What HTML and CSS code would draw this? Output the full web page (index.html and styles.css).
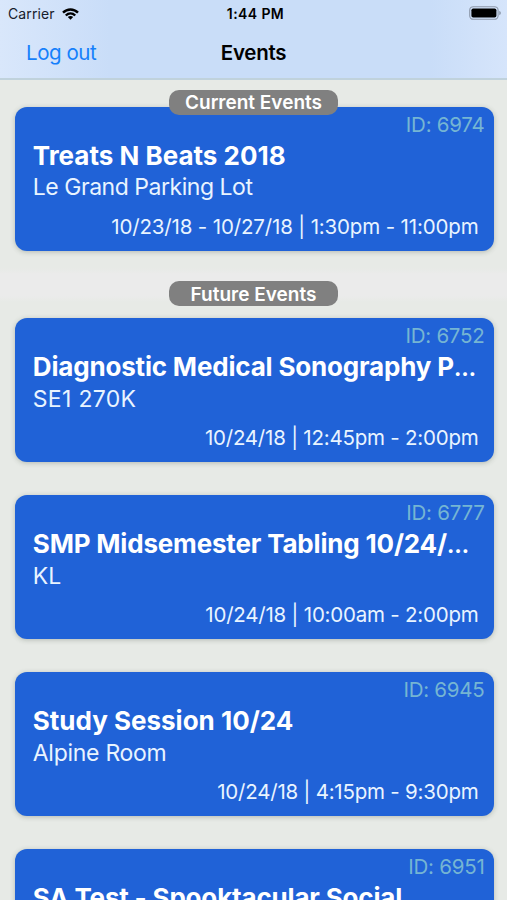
FILE: index.html
```html
<!DOCTYPE html>
<html lang="en">
<head>
<meta charset="utf-8">
<title>Events</title>
<link rel="stylesheet" href="styles.css">
</head>
<body>
<div class="screen">
  <header class="top">
    <div class="status">
      <div class="carrier"><span>Carrier</span>
        <svg class="wifi" viewBox="0 0 17 12" width="17" height="12"><g fill="none" stroke="#000" stroke-width="2.4"><path d="M1 4.6C5.2.4 11.8.4 16 4.6"/><path d="M3.8 7.5c2.7-2.6 6.7-2.6 9.4 0"/></g><path d="M5.8 9.1c1.5-1.4 3.9-1.4 5.4 0L8.5 11.8z"/></svg>
      </div>
      <span class="clock">1:44 PM</span>
      <svg class="battery" viewBox="0 0 33 14" width="33" height="14"><rect x=".7" y=".7" width="28.4" height="12.6" rx="3.6" fill="none" stroke="#8d98aa" stroke-width="1.1"/><rect x="2.4" y="2.4" width="25" height="9.2" rx="1.8"/><path d="M30.4 4.8c1.8.7 1.8 3.7 0 4.4z" fill="#7f899a"/></svg>
    </div>
    <nav class="nav">
      <a class="logout">Log out</a>
      <h1 class="heading">Events</h1>
    </nav>
  </header>
  <main class="list">
    <section>
      <div class="section-head first"><h2 class="pill">Current Events</h2></div>
      <article class="card">
        <div class="id">ID: 6974</div>
        <h3 class="title">Treats N Beats 2018</h3>
        <div class="place tight">Le Grand Parking Lot</div>
        <div class="when range">10/23/18 - 10/27/18 | 1:30pm - 11:00pm</div>
      </article>
    </section>
    <section class="future">
      <div class="section-head next"><h2 class="pill">Future Events</h2></div>
      <article class="card">
        <div class="id">ID: 6752</div>
        <h3 class="title long">Diagnostic Medical Sonography P<span class="dots">…</span></h3>
        <div class="place wide">SE1 270K</div>
        <div class="when">10/24/18 | 12:45pm - 2:00pm</div>
      </article>
      <article class="card">
        <div class="id">ID: 6777</div>
        <h3 class="title long">SMP Midsemester Tabling 10/24/<span class="dots">…</span></h3>
        <div class="place">KL</div>
        <div class="when">10/24/18 | 10:00am - 2:00pm</div>
      </article>
      <article class="card">
        <div class="id">ID: 6945</div>
        <h3 class="title">Study Session 10/24</h3>
        <div class="place snug">Alpine Room</div>
        <div class="when">10/24/18 | 4:15pm - 9:30pm</div>
      </article>
      <article class="card">
        <div class="id">ID: 6951</div>
        <h3 class="title long">SA Test - Spooktacular Social</h3>
      </article>
    </section>
  </main>
</div>
</body>
</html>
```
FILE: styles.css
```css
* { box-sizing: border-box; }
body { margin: 0; font-family: Inter, "Liberation Sans", sans-serif; }
h1, h2, h3 { margin: 0; }
.screen { width: 507px; height: 900px; overflow: hidden; background: #e7eae6; }

.top {
  height: 80px;
  border-bottom: 2px solid #c0d2dc;
  background: linear-gradient(90deg, #d9e7fb 0, #c9ddf8 110px, #c9ddf8 430px, #d6e5fb 100%);
}
.status {
  display: grid;
  grid-template-columns: 1fr auto 1fr;
  align-items: center;
  height: 28px;
  padding: 0 5px 0 8px;
  font-size: 14px;
  line-height: 28px;
}
.carrier { display: flex; align-items: center; gap: 7px; color: #17202b; letter-spacing: 0.1px; }
.wifi { display: block; }
.clock { padding-left: 1px; font-weight: 600; letter-spacing: 0.4px; }
.battery { justify-self: end; margin-bottom: 2px; }
.nav {
  display: grid;
  grid-template-columns: 1fr auto 1fr;
  height: 50px;
  padding: 0 26px;
  line-height: 50px;
}
.logout { font-size: 20.5px; letter-spacing: -0.45px; color: #1580fb; }
.heading { font-size: 20.5px; font-weight: 600; line-height: 50px; letter-spacing: -0.3px; }

.section-head {
  display: flex;
  justify-content: center;
  height: 34px;
  margin-bottom: 16px;
  padding-top: 13px;
  background: linear-gradient(#e7eae6, #ebebeb 6px, #ebebeb 28px, #e7eae6);
}
.section-head.first { height: 11px; padding-top: 10px; background: none; }
.section-head.next { margin-top: -16px; }
.pill {
  position: relative;
  flex: none;
  width: 169px;
  height: 25px;
  border-radius: 10px;
  background: #808080;
  color: #fff;
  font-size: 19px;
  font-weight: 600;
  line-height: 25px;
  text-align: center;
}
.future .pill { line-height: 27px; }
.card {
  height: 144px;
  margin: 0 13.5px 33px 15.4px;
  padding: 6px 9px 0 17.4px;
  border-radius: 12px;
  background: #2062d7;
  box-shadow: 0 1px 5px rgba(60, 75, 60, 0.3);
  color: #e9f4ff;
}
.id { height: 24px; font-size: 20.5px; line-height: 24px; letter-spacing: -0.25px; text-align: right; color: #75b5d3; }
.title { height: 34px; font-size: 26px; font-weight: 700; line-height: 38px; color: #fff; white-space: nowrap; }
.title.long { letter-spacing: -0.18px; }
.dots { font-size: 22px; letter-spacing: 0; }
.place { height: 32px; font-size: 23px; line-height: 32px; }
.future .place { line-height: 34px; }
.place.tight { letter-spacing: -0.47px; }
.place.snug { letter-spacing: -0.28px; }
.place.wide { letter-spacing: 0.3px; }
.when { height: 32px; margin: 7px 6px 0 0; font-size: 20.5px; line-height: 33px; letter-spacing: -0.22px; text-align: right; white-space: nowrap; }
.when.range { letter-spacing: -0.15px; }
```
